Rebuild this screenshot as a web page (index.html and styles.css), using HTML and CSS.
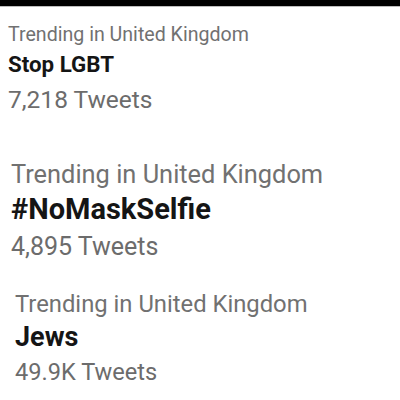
FILE: index.html
```html
<!DOCTYPE html>
<html>
<head>
<meta charset="utf-8">
<link rel="stylesheet" href="styles.css">
</head>
<body>
<div class="topbar"></div>
<div class="trend t1">
  <div class="meta">Trending in United Kingdom</div>
  <div class="title">Stop LGBT</div>
  <div class="count">7,218 Tweets</div>
</div>
<div class="trend t2">
  <div class="meta">Trending in United Kingdom</div>
  <div class="title">#NoMaskSelfie</div>
  <div class="count">4,895 Tweets</div>
</div>
<div class="trend t3">
  <div class="meta">Trending in United Kingdom</div>
  <div class="title">Jews</div>
  <div class="count">49.9K Tweets</div>
</div>
</body>
</html>
```
FILE: styles.css
```css
html, body {
  margin: 0;
  padding: 0;
  background: #ffffff;
  width: 400px;
  height: 400px;
  overflow: hidden;
  font-family: Roboto, "Liberation Sans", sans-serif;
}
.topbar {
  height: 6px;
  background: #000;
  border-bottom: 1px solid #bdbdbd;
}
.trend {
  display: flex;
  flex-direction: column;
}
.meta { color: #717171; }
.title { color: #151515; font-weight: 700; }
.count { color: #6c6c6c; }

.t1 { padding: 16px 0 0 8px; }
.t1 .meta { font-size: 19.6px; line-height: 24px; }
.t1 .title { font-size: 22.3px; line-height: 34px; }
.t1 .count { font-size: 24.5px; line-height: 37.2px; }

.t2 { padding: 39.8px 0 0 11px; }
.t2 .meta { font-size: 25.4px; line-height: 32px; }
.t2 .title { font-size: 29px; line-height: 38.2px; }
.t2 .count { font-size: 25px; line-height: 38.5px; }

.t3 { padding: 21.9px 0 0 15px; }
.t3 .meta { font-size: 23.8px; line-height: 30px; }
.t3 .title { font-size: 27px; line-height: 36.3px; }
.t3 .count { font-size: 23.6px; line-height: 35.5px; }
```
